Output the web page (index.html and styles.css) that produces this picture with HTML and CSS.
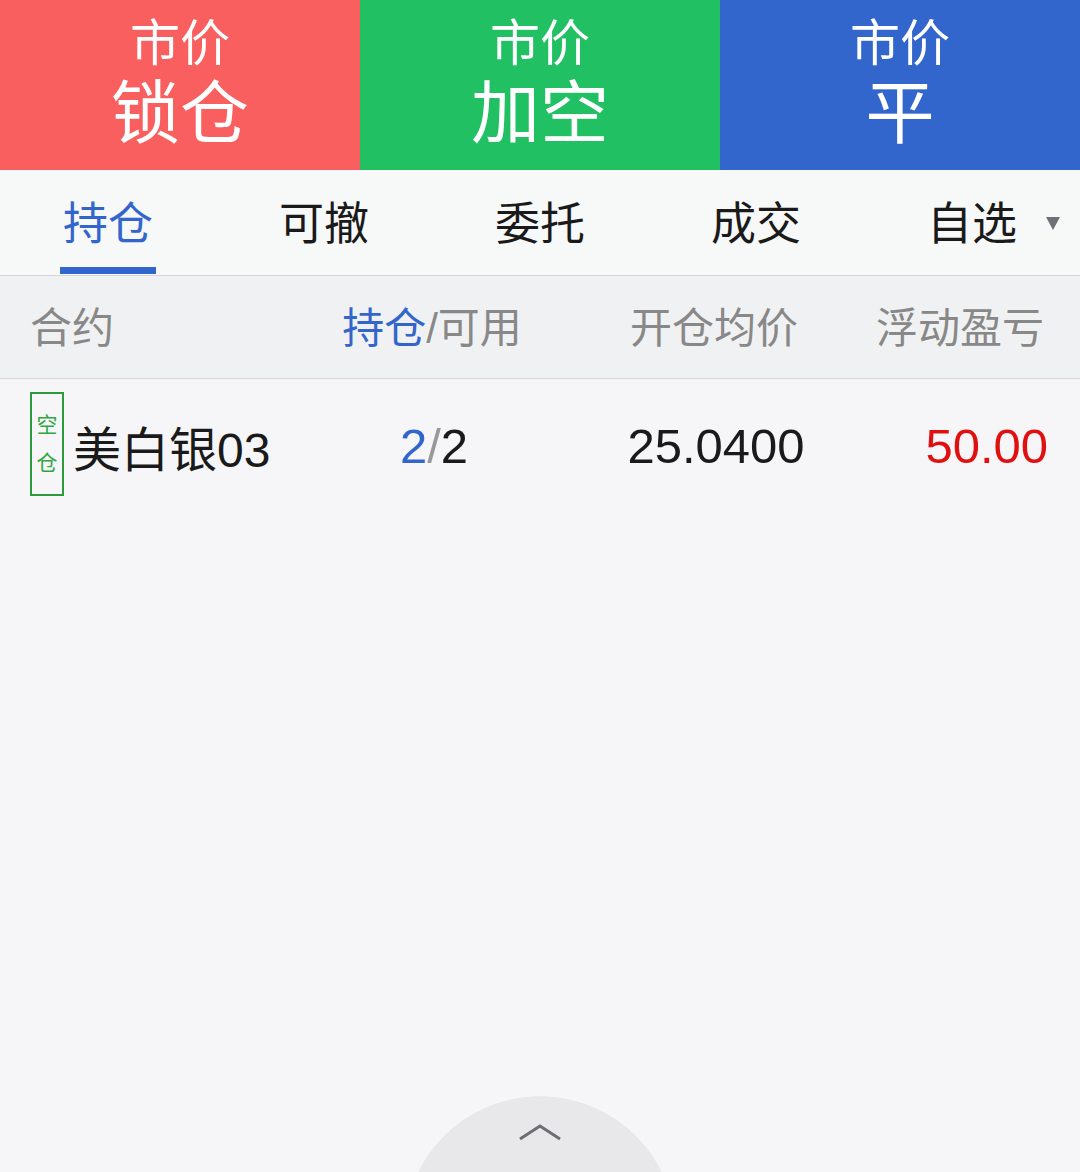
FILE: index.html
```html
<!DOCTYPE html>
<html lang="zh">
<head>
  <meta charset="UTF-8" />
  <meta name="viewport" content="width=device-width, initial-scale=1.0"/>
  <title>持仓</title>
  <link rel="stylesheet" href="styles.css">
</head>
<body>

  <div class="actions">
    <div class="action red">
      <span class="small">市价</span>
      <span class="big">锁仓</span>
    </div>
    <div class="action green">
      <span class="small">市价</span>
      <span class="big">加空</span>
    </div>
    <div class="action blue">
      <span class="small">市价</span>
      <span class="big">平</span>
    </div>
  </div>

  <div class="tabs">
    <div class="tab active"><span>持仓</span></div>
    <div class="tab"><span>可撤</span></div>
    <div class="tab"><span>委托</span></div>
    <div class="tab"><span>成交</span></div>
    <div class="tab select"><span>自选</span><i class="caret"></i></div>
  </div>

  <div class="row head">
    <div class="c1">合约</div>
    <div class="c2"><span class="hl">持仓</span>/可用</div>
    <div class="c3">开仓均价</div>
    <div class="c4">浮动盈亏</div>
  </div>

  <div class="row item">
    <div class="c1">
      <span class="badge">空<br>仓</span>
      <span class="name">美白银03</span>
    </div>
    <div class="c2"><span class="hl">2</span><span class="sep">/</span>2</div>
    <div class="c3">25.0400</div>
    <div class="c4 up">50.00</div>
  </div>

  <div class="pull">
    <svg width="44" height="20" viewBox="0 0 44 20">
      <polyline points="2,17 22,4 42,17" fill="none" stroke="#6e6e72" stroke-width="3"/>
    </svg>
  </div>

</body>
</html>
```

FILE: styles.css
```css
html {
  overflow: hidden;
}
body {
  margin: 0;
  background: #f6f6f8;
  font-family: "Liberation Sans", "Noto Sans CJK SC", sans-serif;
  color: #1a1a1a;
  height: 1172px;
  overflow: hidden;
  position: relative;
}
.actions {
  display: flex;
  height: 170px;
}
.action {
  flex: 1;
  display: flex;
  flex-direction: column;
  align-items: center;
  color: #fff;
  padding-top: 16px;
  box-sizing: border-box;
}
.action .small {
  font-size: 50px;
  line-height: 56px;
}
.action .big {
  font-size: 69px;
  line-height: 86px;
}
.red { background: #f95f5f; }
.green { background: #21c063; }
.blue { background: #3366cc; }

.tabs {
  display: flex;
  height: 105px;
  background: #f7f8f8;
  border-bottom: 1px solid #d6d6d8;
}
.tab {
  flex: 1;
  display: flex;
  justify-content: center;
  align-items: center;
  font-size: 45px;
  position: relative;
}
.tab span {
  position: relative;
  top: -2px;
}
.tab.active {
  color: #3366cc;
}
.tab.active::after {
  content: "";
  position: absolute;
  left: 60px;
  width: 96px;
  bottom: 1px;
  height: 7px;
  background: #3366cc;
}
.caret {
  position: absolute;
  right: 20px;
  top: 47px;
  width: 0;
  height: 0;
  border-left: 7px solid transparent;
  border-right: 7px solid transparent;
  border-top: 13px solid #707078;
}

.row {
  display: grid;
  grid-template-columns: 290px 220px 1fr 180px;
  align-items: center;
  padding: 0 36px 0 32px;
  white-space: nowrap;
}
.row .c2 { text-align: center; }
.row .c3 {
  text-align: center;
  padding-left: 22px;
}
.row .c4 { text-align: right; }
.head {
  height: 102px;
  background: #f0f1f2;
  border-bottom: 1px solid #d6d6d8;
  color: #888;
  font-size: 42px;
}
.head > div {
  position: relative;
  top: -3px;
}
.head .c1 { margin-left: -2px; }
.head .hl { color: #3366cc; }
.item {
  height: 134px;
  font-size: 49px;
  padding-right: 32px;
}
.item .c1 {
  display: flex;
  align-items: center;
}
.item .c2 { padding-left: 4px; }
.badge {
  width: 30px;
  height: 100px;
  border: 2px solid #2a9a3a;
  color: #2fa844;
  font-size: 21px;
  line-height: 38px;
  text-align: center;
  display: flex;
  flex-direction: column;
  justify-content: center;
  margin-left: -2px;
  margin-right: 9px;
  position: relative;
  top: -2px;
}
.name {
  font-size: 48px;
}
.item .hl { color: #3366cc; }
.sep { color: #999; }
.up { color: #e01010; }

/* half circle handle at the bottom edge */
.pull {
  position: absolute;
  left: 404px;
  bottom: 0;
  width: 272px;
  height: 76px;
  background: radial-gradient(circle 136px at 50% 136px, #e8e8ea 99.5%, transparent 100%);
  display: flex;
  justify-content: center;
  padding-top: 26px;
  box-sizing: border-box;
}
```
